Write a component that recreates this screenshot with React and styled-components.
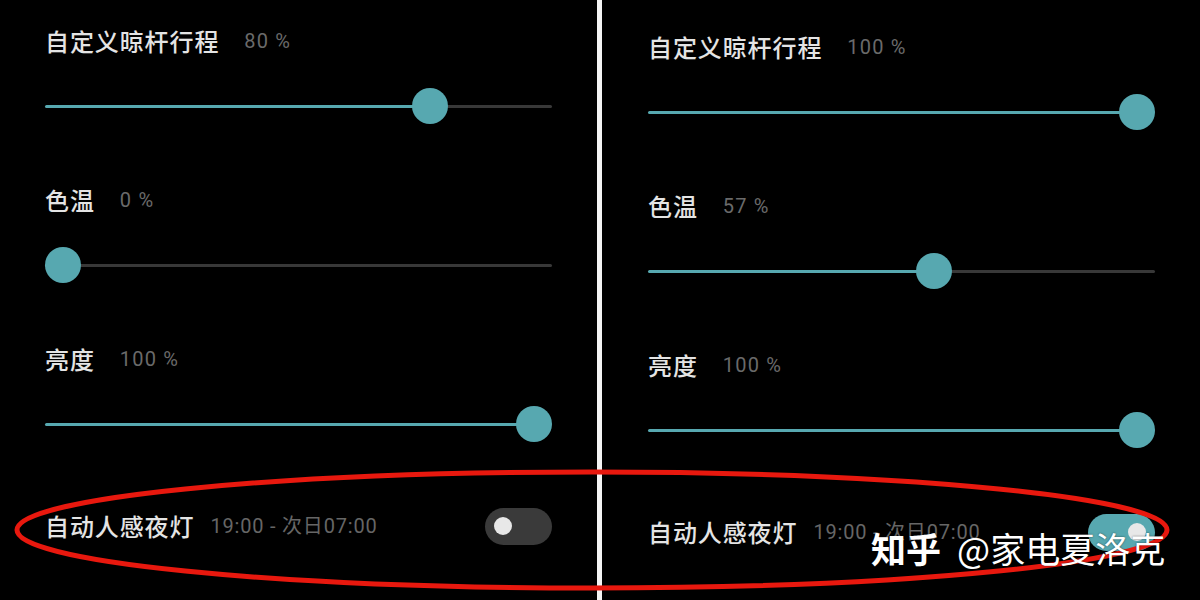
import React from "react";
import styled, { createGlobalStyle } from "styled-components";

const Global = createGlobalStyle`
  html, body { margin: 0; padding: 0; background: #000; }
  #root { width: 1200px; height: 600px; }
`;

const TEAL = "#57a8b0";
const RAIL = "#383838";
const CJK = `"Noto Sans CJK SC", "Noto Sans", sans-serif`;
const NUM = `Roboto, "Noto Sans CJK SC", sans-serif`;

const Page = styled.div`
  position: relative;
  width: 1200px;
  height: 600px;
  display: flex;
  background: #000;
  overflow: hidden;
`;

const Panel = styled.section`
  flex: 0 0 ${(p) => p.$width}px;
  box-sizing: border-box;
  padding: ${(p) => p.$top}px 0 0 ${(p) => p.$left}px;
  display: flex;
  flex-direction: column;
  gap: 59px;
`;

const Divider = styled.div`
  flex: 0 0 5px;
  background: #f4f4f4;
`;

const Block = styled.div`
  display: flex;
  flex-direction: column;
  gap: 30px;
  width: 507px;
`;

const LabelRow = styled.div`
  display: flex;
  align-items: center;
  height: 34px;
  line-height: 34px;
`;

const Title = styled.span`
  font-family: ${CJK};
  font-size: 24px;
  font-weight: 500;
  color: #e4e4e4;
  letter-spacing: 0.9px;
`;

const Value = styled.span`
  margin-left: 25px;
  font-family: ${NUM};
  font-size: 20px;
  color: #6a6a6a;
  letter-spacing: 1.2px;
`;

const Slider = styled.div`
  position: relative;
  width: 507px;
  height: 36px;
  display: flex;
  align-items: center;
`;

const Rail = styled.div`
  flex: 1;
  height: 3px;
  border-radius: 2px;
`;

const Thumb = styled.div`
  position: absolute;
  top: 0;
  width: 36px;
  height: 36px;
  border-radius: 50%;
  background: ${TEAL};
`;

const NightRow = styled.div`
  display: flex;
  align-items: center;
  width: 507px;
  height: 50px;
  line-height: 34px;
`;

const Time = styled.span`
  flex: 1;
  margin-left: 16px;
  font-family: ${NUM};
  font-size: 20px;
  color: #666;
  letter-spacing: 0.8px;
`;

const Toggle = styled.div`
  box-sizing: border-box;
  width: 67px;
  height: 37px;
  border-radius: 19px;
  padding: 0 9px;
  display: flex;
  align-items: center;
  justify-content: ${(p) => (p.$on ? "flex-end" : "flex-start")};
  background: ${(p) => (p.$on ? TEAL : "#3a3a3a")};
`;

const Knob = styled.div`
  width: 18px;
  height: 18px;
  border-radius: 50%;
  background: #e8e8e8;
`;

const Overlay = styled.svg`
  position: absolute;
  left: 0;
  top: 0;
  pointer-events: none;
`;

const Watermark = styled.div`
  position: absolute;
  left: 871px;
  top: 530px;
  font-family: ${CJK};
  font-size: 35px;
  line-height: 35px;
  color: #fff;
  white-space: nowrap;
  text-shadow: 0 0 2px rgba(0, 0, 0, 0.6);
`;

const Brand = styled.span`
  font-weight: 700;
  margin-right: 16px;
`;

function SliderBlock({ title, value, pos }) {
  const center = 18 + pos * 471;
  return (
    <Block>
      <LabelRow>
        <Title>{title}</Title>
        <Value>{value}</Value>
      </LabelRow>
      <Slider>
        <Rail
          style={{
            background: `linear-gradient(to right, ${TEAL} 0 ${center}px, ${RAIL} ${center}px 100%)`,
          }}
        />
        <Thumb style={{ left: center - 18 }} />
      </Slider>
    </Block>
  );
}

function SettingsPanel({ width, top, left, sliders, nightOn }) {
  return (
    <Panel $width={width} $top={top} $left={left}>
      {sliders.map((s) => (
        <SliderBlock key={s.title} {...s} />
      ))}
      <NightRow>
        <Title>自动人感夜灯</Title>
        <Time>19:00 - 次日07:00</Time>
        <Toggle $on={nightOn}>
          <Knob />
        </Toggle>
      </NightRow>
    </Panel>
  );
}

const leftSliders = [
  { title: "自定义晾杆行程", value: "80 %", pos: 0.779 },
  { title: "色温", value: "0 %", pos: 0 },
  { title: "亮度", value: "100 %", pos: 1 },
];

const rightSliders = [
  { title: "自定义晾杆行程", value: "100 %", pos: 1 },
  { title: "色温", value: "57 %", pos: 0.569 },
  { title: "亮度", value: "100 %", pos: 1 },
];

export default function App() {
  return (
    <>
      <Global />
      <Page>
        <SettingsPanel width={597} top={24} left={45} sliders={leftSliders} nightOn={false} />
        <Divider />
        <SettingsPanel width={598} top={30} left={46} sliders={rightSliders} nightOn />
        <Overlay width="1200" height="600" viewBox="0 0 1200 600">
          <ellipse cx="592" cy="530" rx="575" ry="58" fill="none" stroke="#e8180e" strokeWidth="5" />
        </Overlay>
        <Watermark>
          <Brand>知乎</Brand>@家电夏洛克
        </Watermark>
      </Page>
    </>
  );
}
